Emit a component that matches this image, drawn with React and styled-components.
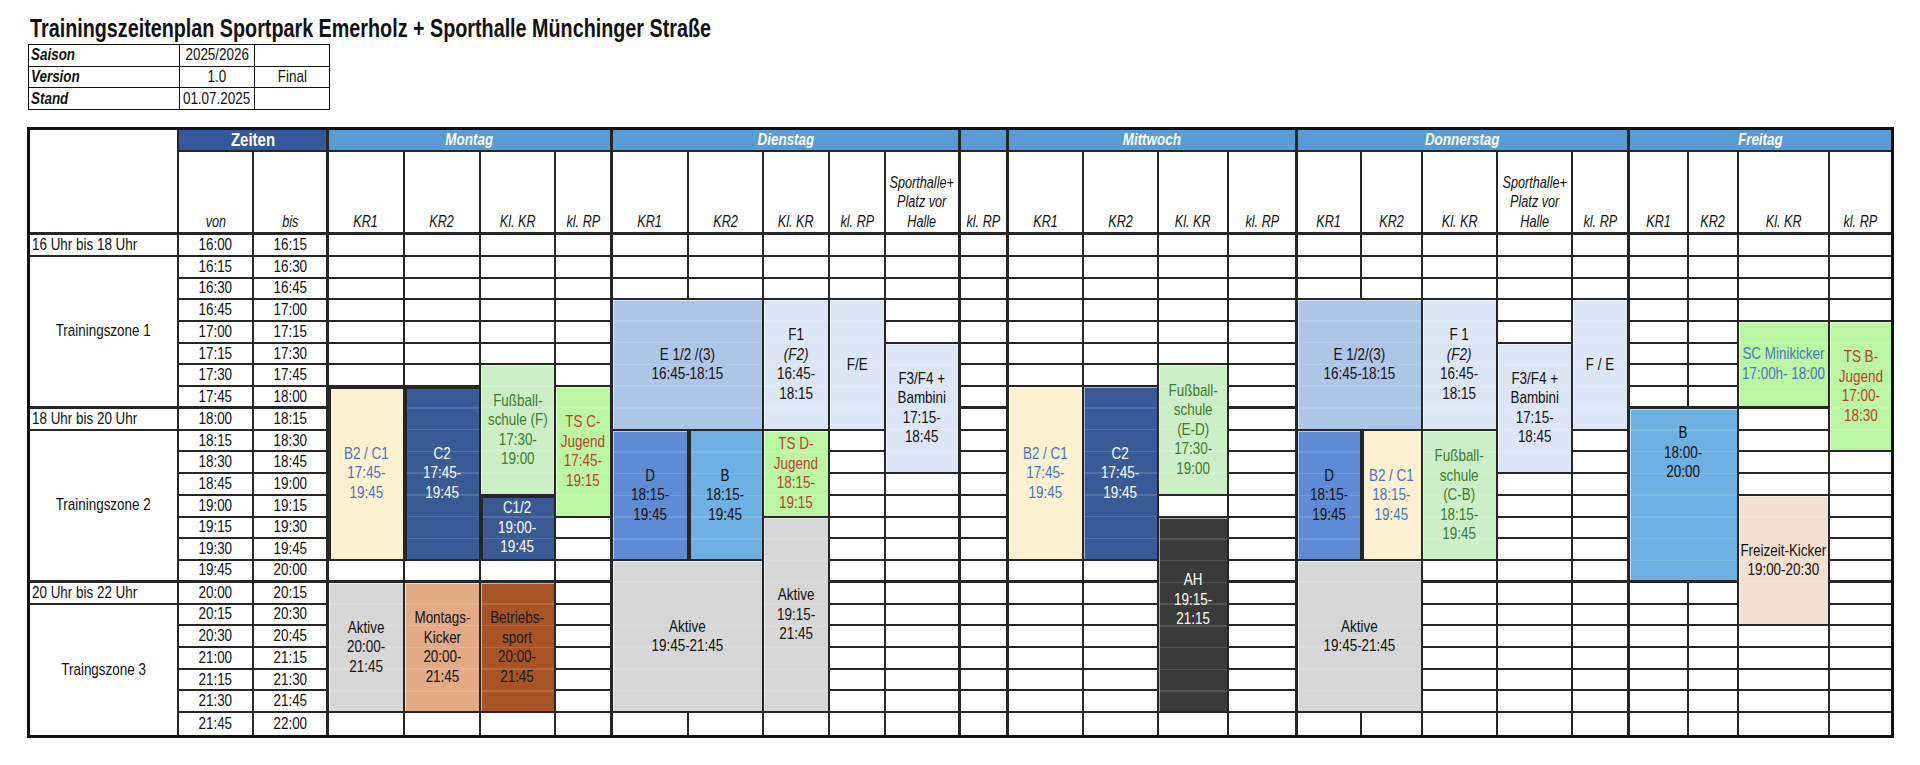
import React from 'react';
import styled, { createGlobalStyle, css } from 'styled-components';

const COLS = [149, 75, 75, 76, 76, 75, 57, 76, 75, 66, 56, 75, 48, 75, 75, 70, 69, 64, 61, 75, 75, 57, 59, 50, 91, 61];
const THICK_AFTER = [2, 6, 11, 12, 16, 21];
const LAST_COL = COLS.length - 1;
const LAST_ROW = 22;
const ROW_H = 21.74;

const C = {
	line: '#262626',
	zeiten: '#35589a',
	day: '#5b9bd5',
	e12: '#adc6e8',
	f1: '#dce6f4',
	dBlue: '#5e8bd4',
	sky: '#6db0e1',
	cream: '#fcf1d0',
	navy: '#3a5a95',
	mint: '#cdefc8',
	lime: '#bcf6a2',
	grey: '#d7d7d7',
	salmon: '#e3aa87',
	brown: '#a95426',
	ah: '#3a3a3a',
	peach: '#f4dfd0',
	redText: '#b5452c',
	blueText: '#4a76bd',
	greenText: '#3f7b2e',
};

const TIMES = [
	['16:00', '16:15'], ['16:15', '16:30'], ['16:30', '16:45'], ['16:45', '17:00'],
	['17:00', '17:15'], ['17:15', '17:30'], ['17:30', '17:45'], ['17:45', '18:00'],
	['18:00', '18:15'], ['18:15', '18:30'], ['18:30', '18:45'], ['18:45', '19:00'],
	['19:00', '19:15'], ['19:15', '19:30'], ['19:30', '19:45'], ['19:45', '20:00'],
	['20:00', '20:15'], ['20:15', '20:30'], ['20:30', '20:45'], ['21:00', '21:15'],
	['21:15', '21:30'], ['21:30', '21:45'], ['21:45', '22:00'],
];

const ZONES = [
	{ r: 0, rs: 1, text: '16 Uhr bis 18 Uhr', left: true },
	{ r: 1, rs: 7, text: 'Trainingszone 1' },
	{ r: 8, rs: 1, text: '18 Uhr bis 20 Uhr', left: true },
	{ r: 9, rs: 7, text: 'Trainingszone 2' },
	{ r: 16, rs: 1, text: '20 Uhr bis 22 Uhr', left: true },
	{ r: 17, rs: 6, text: 'Traingszone 3' },
];

const DAYS = [
	{ c: 3, cs: 4, name: 'Montag' },
	{ c: 7, cs: 5, name: 'Dienstag' },
	{ c: 12, cs: 1, name: '' },
	{ c: 13, cs: 4, name: 'Mittwoch' },
	{ c: 17, cs: 5, name: 'Donnerstag' },
	{ c: 22, cs: 4, name: 'Freitag' },
];

const HALLE = ['Sporthalle+', 'Platz vor', 'Halle'];
const SUB = [
	null, ['von'], ['bis'],
	['KR1'], ['KR2'], ['Kl. KR'], ['kl. RP'],
	['KR1'], ['KR2'], ['Kl. KR'], ['kl. RP'], HALLE,
	['kl. RP'],
	['KR1'], ['KR2'], ['Kl. KR'], ['kl. RP'],
	['KR1'], ['KR2'], ['Kl. KR'], HALLE, ['kl. RP'],
	['KR1'], ['KR2'], ['Kl. KR'], ['kl. RP'],
];

const BLOCKS = [
	// Montag
	{ c: 3, r: 7, rs: 8, bg: C.cream, fg: C.blueText, outline: true, lines: ['B2 / C1', '17:45-', '19:45'] },
	{ c: 4, r: 7, rs: 8, bg: C.navy, fg: '#fff', outline: true, lines: ['C2', '17:45-', '19:45'] },
	{ c: 5, r: 6, rs: 6, bg: C.mint, fg: C.greenText, lines: ['Fußball-', 'schule (F)', '17:30-', '19:00'] },
	{ c: 5, r: 12, rs: 3, bg: C.navy, fg: '#fff', outline: true, lines: ['C1/2', '19:00-', '19:45'] },
	{ c: 6, r: 7, rs: 6, bg: C.lime, fg: C.redText, lines: ['TS C-', 'Jugend', '17:45-', '19:15'] },
	{ c: 3, r: 16, rs: 6, bg: C.grey, lines: ['Aktive', '20:00-', '21:45'] },
	{ c: 4, r: 16, rs: 6, bg: C.salmon, lines: ['Montags-', 'Kicker', '20:00-', '21:45'] },
	{ c: 5, r: 16, rs: 6, bg: C.brown, fg: '#1a1a1a', lines: ['Betriebs-', 'sport', '20:00-', '21:45'] },
	// Dienstag
	{ c: 7, r: 3, cs: 2, rs: 6, bg: C.e12, lines: ['E 1/2 /(3)', '16:45-18:15'] },
	{ c: 9, r: 3, rs: 6, bg: C.f1, lines: ['F1', { i: '(F2)' }, '16:45-', '18:15'] },
	{ c: 10, r: 3, rs: 6, bg: C.f1, lines: ['F/E'] },
	{ c: 11, r: 5, rs: 6, bg: C.f1, lines: ['F3/F4 +', 'Bambini', '17:15-', '18:45'] },
	{ c: 7, r: 9, rs: 6, bg: C.dBlue, lines: ['D', '18:15-', '19:45'] },
	{ c: 8, r: 9, rs: 6, bg: C.sky, sep: true, lines: ['B', '18:15-', '19:45'] },
	{ c: 9, r: 9, rs: 4, bg: C.lime, fg: C.redText, lines: ['TS D-', 'Jugend', '18:15-', '19:15'] },
	{ c: 9, r: 13, rs: 9, bg: C.grey, lines: ['Aktive', '19:15-', '21:45'] },
	{ c: 7, r: 15, cs: 2, rs: 7, bg: C.grey, lines: ['Aktive', '19:45-21:45'] },
	// Mittwoch
	{ c: 13, r: 7, rs: 8, bg: C.cream, fg: C.blueText, lines: ['B2 / C1', '17:45-', '19:45'] },
	{ c: 14, r: 7, rs: 8, bg: C.navy, fg: '#fff', lines: ['C2', '17:45-', '19:45'] },
	{ c: 15, r: 6, rs: 6, bg: C.mint, fg: C.greenText, lines: ['Fußball-', 'schule', '(E-D)', '17:30-', '19:00'] },
	{ c: 15, r: 13, rs: 9, bg: C.ah, fg: '#fff', pb: 30, lines: ['AH', '19:15-', '21:15'] },
	// Donnerstag
	{ c: 17, r: 3, cs: 2, rs: 6, bg: C.e12, lines: ['E 1/2/(3)', '16:45-18:15'] },
	{ c: 19, r: 3, rs: 6, bg: C.f1, lines: ['F 1', { i: '(F2)' }, '16:45-', '18:15'] },
	{ c: 20, r: 5, rs: 6, bg: C.f1, lines: ['F3/F4 +', 'Bambini', '17:15-', '18:45'] },
	{ c: 21, r: 3, rs: 6, bg: C.f1, lines: ['F / E'] },
	{ c: 17, r: 9, rs: 6, bg: C.dBlue, lines: ['D', '18:15-', '19:45'] },
	{ c: 18, r: 9, rs: 6, bg: C.cream, fg: C.blueText, sep: true, lines: ['B2 / C1', '18:15-', '19:45'] },
	{ c: 19, r: 9, rs: 6, bg: C.mint, fg: C.greenText, lines: ['Fußball-', 'schule', '(C-B)', '18:15-', '19:45'] },
	{ c: 17, r: 15, cs: 2, rs: 7, bg: C.grey, lines: ['Aktive', '19:45-21:45'] },
	// Freitag
	{ c: 24, r: 4, rs: 4, bg: C.lime, fg: C.blueText, lines: ['SC Minikicker', '17:00h- 18:00'] },
	{ c: 25, r: 4, rs: 6, bg: C.lime, fg: C.redText, lines: ['TS B-', 'Jugend', '17:00-', '18:30'] },
	{ c: 22, r: 8, cs: 2, rs: 8, bg: C.sky, pb: 84, lines: ['B', '18:00-', '20:00'] },
	{ c: 24, r: 12, rs: 6, bg: C.peach, lines: ['Freizeit-Kicker', '19:00-20:30'] },
];

const rightW = (cEnd) => (cEnd === LAST_COL ? 0 : THICK_AFTER.includes(cEnd) ? 3 : 2);
const bottomW = (rEnd) => (rEnd === LAST_ROW ? 0 : rEnd === 7 || rEnd === 15 ? 3 : 2);

// data row r -> grid line r + 3 (two header rows above)
const at = (c, r, cs = 1, rs = 1) => ({
	$c: c + 1,
	$cs: cs,
	$r: r + 3,
	$rs: rs,
	$rw: rightW(c + cs - 1),
	$bw: bottomW(r + rs - 1),
});

const GlobalStyle = createGlobalStyle`
	body {
		margin: 0;
		background: #fff;
		font-family: "Liberation Sans", Arial, sans-serif;
		color: #111;
	}
`;

const Page = styled.div`
	padding: 13px 0 0 27px;
	width: 1920px;
	box-sizing: border-box;
`;

const Squeeze = styled.span`
	display: inline-block;
	white-space: nowrap;
	transform: scaleX(0.79);
	transform-origin: ${(p) => (p.$left ? 'left' : 'center')} center;
`;

const Title = styled.h1`
	margin: 0;
	padding-left: 3px;
	font-size: 25px;
	line-height: 30px;
	font-weight: bold;
	color: #111;
`;

const InfoGrid = styled.div`
	display: grid;
	grid-template-columns: 151px 75px 75px;
	grid-auto-rows: 21.7px;
	width: fit-content;
	margin: 1px 0 0 1px;
	border-top: 1px solid #111;
	border-left: 1px solid #111;
`;

const InfoCell = styled.div`
	display: flex;
	align-items: center;
	justify-content: ${(p) => (p.$label ? 'flex-start' : 'center')};
	padding-left: ${(p) => (p.$label ? '2px' : '0')};
	border-right: 1px solid #111;
	border-bottom: 1px solid #111;
	font-size: 17px;
	font-weight: ${(p) => (p.$label ? 'bold' : 'normal')};
	font-style: ${(p) => (p.$label ? 'italic' : 'normal')};
	overflow: hidden;
`;

const Table = styled.div`
	margin-top: 17px;
	display: grid;
	grid-template-columns: ${COLS.map((w) => w + 'px').join(' ')};
	grid-template-rows: 22px 83px repeat(23, ${ROW_H}px);
	width: fit-content;
	border: 3px solid #111;
	background: #fff;
`;

const placed = css`
	grid-column: ${(p) => p.$c} / span ${(p) => p.$cs};
	grid-row: ${(p) => p.$r} / span ${(p) => p.$rs};
	border-right: ${(p) => p.$rw}px solid ${C.line};
	border-bottom: ${(p) => p.$bw}px solid ${C.line};
	box-sizing: border-box;
	min-width: 0;
	display: flex;
	align-items: center;
	justify-content: center;
	text-align: center;
`;

const Corner = styled.div`
	${placed}
`;

const ZeitenHead = styled.div`
	${placed}
	background: ${C.zeiten};
	color: #fff;
	font-size: 19px;
	font-weight: bold;
`;

const DayHead = styled.div`
	${placed}
	background: ${C.day};
	color: #fff;
	font-size: 17px;
	font-weight: bold;
	font-style: italic;
`;

const SubHead = styled.div`
	${placed}
	align-items: flex-end;
	padding-bottom: 1px;
	font-size: 16px;
	line-height: 19.5px;
	font-style: italic;
`;

const ZoneCell = styled.div`
	${placed}
	justify-content: ${(p) => (p.$left ? 'flex-start' : 'center')};
	padding-left: ${(p) => (p.$left ? '2px' : '0')};
	font-size: 17px;
`;

const TimeCell = styled.div`
	${placed}
	font-size: 17px;
`;

const EmptyCell = styled.div`
	${placed}
`;

const Block = styled.div`
	${placed}
	background-color: ${(p) => p.$bg};
	background-image: repeating-linear-gradient(
		to bottom,
		transparent 0,
		transparent ${ROW_H - 1.5}px,
		rgba(255, 255, 255, 0.13) ${ROW_H - 1.5}px,
		rgba(255, 255, 255, 0.13) ${ROW_H}px
	);
	color: ${(p) => p.$fg || '#111'};
	font-size: 17px;
	line-height: 19.5px;
	padding-bottom: ${(p) => p.$pb || 0}px;
	overflow: hidden;
	box-shadow: ${(p) =>
		p.$outline
			? `inset 2px 2px 0 ${C.line}`
			: p.$sep
			? `inset 2px 0 0 ${C.line}`
			: 'inset 1px 1px 0 rgba(255,255,255,0.55)'};
`;

const Line = styled.div`
	${(p) => p.$italic && 'font-style: italic;'}
`;

const Lines = ({ lines }) => (
	<Squeeze>
		{lines.map((l, i) =>
			typeof l === 'string' ? <Line key={i}>{l}</Line> : <Line key={i} $italic>{l.i}</Line>
		)}
	</Squeeze>
);

const covered = new Set();
BLOCKS.forEach((b) => {
	for (let r = b.r; r < b.r + b.rs; r++)
		for (let c = b.c; c < b.c + (b.cs || 1); c++) covered.add(r + '-' + c);
});

export default function App() {
	const empties = [];
	TIMES.forEach((_, r) => {
		for (let c = 3; c <= LAST_COL; c++) {
			if (!covered.has(r + '-' + c)) empties.push(<EmptyCell key={'e' + r + '-' + c} {...at(c, r)} />);
		}
	});

	return (
		<Page>
			<GlobalStyle />
			<Title>
				<Squeeze $left>Trainingszeitenplan Sportpark Emerholz + Sporthalle Münchinger Straße</Squeeze>
			</Title>

			<InfoGrid>
				<InfoCell $label><Squeeze $left>Saison</Squeeze></InfoCell>
				<InfoCell><Squeeze>2025/2026</Squeeze></InfoCell>
				<InfoCell />
				<InfoCell $label><Squeeze $left>Version</Squeeze></InfoCell>
				<InfoCell><Squeeze>1.0</Squeeze></InfoCell>
				<InfoCell><Squeeze>Final</Squeeze></InfoCell>
				<InfoCell $label><Squeeze $left>Stand</Squeeze></InfoCell>
				<InfoCell><Squeeze>01.07.2025</Squeeze></InfoCell>
				<InfoCell />
			</InfoGrid>

			<Table>
				<Corner $c={1} $cs={1} $r={1} $rs={2} $rw={2} $bw={3} />
				<ZeitenHead $c={2} $cs={2} $r={1} $rs={1} $rw={3} $bw={2}>
					<Squeeze>Zeiten</Squeeze>
				</ZeitenHead>
				{DAYS.map((d) => (
					<DayHead key={d.c} $c={d.c + 1} $cs={d.cs} $r={1} $rs={1} $rw={rightW(d.c + d.cs - 1)} $bw={2}>
						<Squeeze>{d.name}</Squeeze>
					</DayHead>
				))}
				{SUB.map((s, c) =>
					s ? (
						<SubHead key={'s' + c} $c={c + 1} $cs={1} $r={2} $rs={1} $rw={rightW(c)} $bw={3}>
							<Lines lines={s} />
						</SubHead>
					) : null
				)}

				{ZONES.map((z) => (
					<ZoneCell key={'z' + z.r} {...at(0, z.r, 1, z.rs)} $left={z.left}>
						<Squeeze $left={z.left}>{z.text}</Squeeze>
					</ZoneCell>
				))}
				{TIMES.map(([von, bis], r) => (
					<React.Fragment key={'t' + r}>
						<TimeCell {...at(1, r)}>
							<Squeeze>{von}</Squeeze>
						</TimeCell>
						<TimeCell {...at(2, r)}>
							<Squeeze>{bis}</Squeeze>
						</TimeCell>
					</React.Fragment>
				))}

				{empties}

				{BLOCKS.map((b, i) => (
					<Block
						key={'b' + i}
						{...at(b.c, b.r, b.cs || 1, b.rs)}
						$bg={b.bg}
						$fg={b.fg}
						$pb={b.pb}
						$outline={b.outline}
						$sep={b.sep}
					>
						<Lines lines={b.lines} />
					</Block>
				))}
			</Table>
		</Page>
	);
}
